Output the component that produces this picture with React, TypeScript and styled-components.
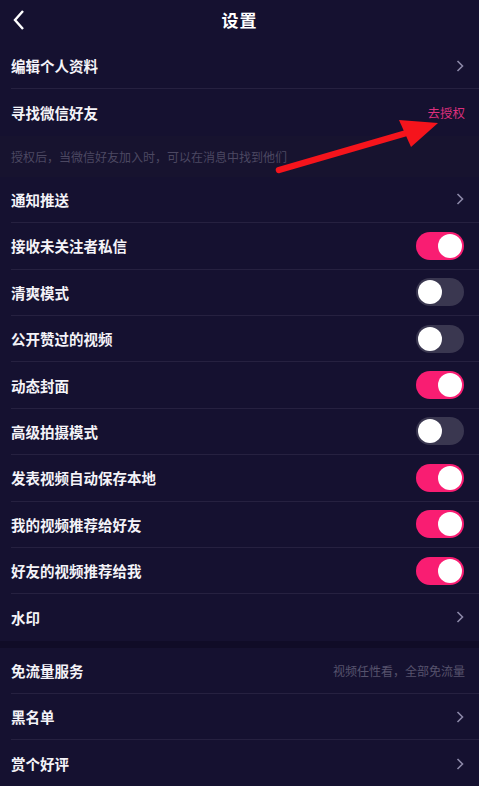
import styled, { createGlobalStyle } from "styled-components";

const GlobalStyle = createGlobalStyle`
  html, body {
    margin: 0;
    padding: 0;
    background: #151130;
  }
  body {
    font-family: "Noto Sans CJK SC", "Noto Sans", sans-serif;
  }
`;

const Page = styled.div`
  position: relative;
  width: 479px;
  height: 786px;
  overflow: hidden;
  background: #151130;
  color: #ffffff;
`;

const Header = styled.div`
  position: relative;
  height: 43px;
  display: flex;
  align-items: center;
  justify-content: center;
`;

const BackButton = styled.div`
  position: absolute;
  left: 8px;
  top: 6px;
  width: 22px;
  height: 28px;
  display: flex;
  align-items: center;
  justify-content: center;
`;

const Title = styled.div`
  font-size: 17px;
  font-weight: 700;
  margin-top: -4px;
  letter-spacing: 1px;
`;

const Row = styled.div<{ $last?: boolean }>`
  height: 46.4px;
  box-sizing: border-box;
  margin-left: 11px;
  padding-right: 14px;
  display: flex;
  align-items: center;
  justify-content: space-between;
  border-bottom: ${(p) => (p.$last ? "none" : "1px solid #262140")};
`;

const Label = styled.span`
  font-size: 14.5px;
  font-weight: 600;
  color: #f4f3f8;
`;

const LinkText = styled.span`
  font-size: 12.5px;
  color: #dc2f7d;
`;

const HintText = styled.span`
  font-size: 12px;
  color: #57536d;
`;

const Note = styled.div`
  height: 41px;
  background: #17132f;
  padding-left: 11px;
  display: flex;
  align-items: center;
  font-size: 12px;
  color: #4c4862;
`;

const Gap = styled.div`
  height: 7px;
  background: #100c27;
`;

const Toggle = styled.div<{ $on: boolean }>`
  position: relative;
  width: 48px;
  height: 28px;
  border-radius: 14px;
  background: ${(p) => (p.$on ? "#f91d72" : "#3a3750")};
  margin-right: 1px;

  &:after {
    content: "";
    position: absolute;
    top: 2px;
    left: ${(p) => (p.$on ? "22px" : "2px")};
    width: 24px;
    height: 24px;
    border-radius: 50%;
    background: #ffffff;
  }
`;

const Arrow = styled.svg`
  position: absolute;
  left: 0;
  top: 0;
  pointer-events: none;
`;

const Chevron = () => (
  <svg width="10" height="14" viewBox="0 0 10 14">
    <path d="M2.5 2 L7.5 7 L2.5 12" fill="none" stroke="#8c88a8" strokeWidth="1.6" />
  </svg>
);

type Item = { label: string; on: boolean };

const toggles: Item[] = [
  { label: "接收未关注者私信", on: true },
  { label: "清爽模式", on: false },
  { label: "公开赞过的视频", on: false },
  { label: "动态封面", on: true },
  { label: "高级拍摄模式", on: false },
  { label: "发表视频自动保存本地", on: true },
  { label: "我的视频推荐给好友", on: true },
  { label: "好友的视频推荐给我", on: true },
];

export default function App() {
  return (
    <Page>
      <GlobalStyle />
      <Header>
        <BackButton>
          <svg width="14" height="22" viewBox="0 0 14 22">
            <path d="M11 2 L3 11 L11 20" fill="none" stroke="#ffffff" strokeWidth="2.4" />
          </svg>
        </BackButton>
        <Title>设置</Title>
      </Header>

      <Row>
        <Label>编辑个人资料</Label>
        <Chevron />
      </Row>
      <Row $last>
        <Label>寻找微信好友</Label>
        <LinkText>去授权</LinkText>
      </Row>
      <Note>授权后，当微信好友加入时，可以在消息中找到他们</Note>

      <Row>
        <Label>通知推送</Label>
        <Chevron />
      </Row>
      {toggles.map((t) => (
        <Row key={t.label}>
          <Label>{t.label}</Label>
          <Toggle $on={t.on} />
        </Row>
      ))}
      <Row $last>
        <Label>水印</Label>
        <Chevron />
      </Row>
      <Gap />
      <Row>
        <Label>免流量服务</Label>
        <HintText>视频任性看，全部免流量</HintText>
      </Row>
      <Row>
        <Label>黑名单</Label>
        <Chevron />
      </Row>
      <Row $last>
        <Label>赏个好评</Label>
        <Chevron />
      </Row>

      <Arrow width="479" height="786" viewBox="0 0 479 786">
        <line x1="279" y1="170" x2="410" y2="132" stroke="#f5141c" strokeWidth="6.5" strokeLinecap="round" />
        <polygon points="438,123 399,120 411,147" fill="#f5141c" />
      </Arrow>
    </Page>
  );
}
